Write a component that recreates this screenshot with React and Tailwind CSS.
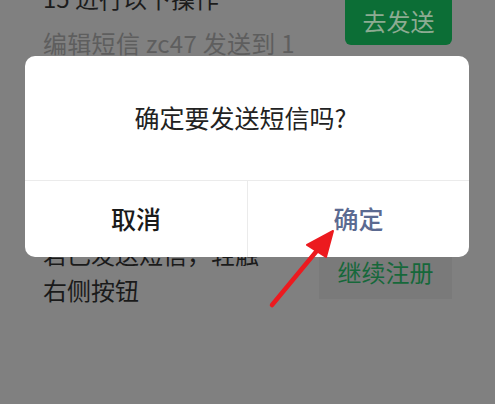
import React from 'react';

const font = { fontFamily: '"Noto Sans CJK SC", "Noto Sans", sans-serif' };

const App = () => {
    return (
        <div className="relative w-[495px] h-[404px] overflow-hidden bg-[#808080]" style={font}>
            {/* dimmed page behind the dialog */}
            <div className="flex flex-col px-[43px] -mt-[20px]">
                <div className="flex justify-between items-start">
                    <div className="flex flex-col">
                        <div className="h-[36px] leading-[36px] text-[24px] text-[#1c1c1c] whitespace-nowrap">15 进行以下操作</div>
                        <div className="mt-[11px] h-[32px] leading-[32px] text-[24px] tracking-[0.3px] text-[#5e5e5e] whitespace-nowrap">编辑短信 zc47 发送到 1</div>
                    </div>
                    <button
                        type="button"
                        className="w-[107px] h-[65px] rounded-[6px] bg-[#0c6e36] flex items-end justify-center pb-[12px] text-[24px] leading-[24px] text-[#8dab92]"
                    >
                        去发送
                    </button>
                </div>
                <div className="mt-[177px] flex justify-between items-center">
                    <div className="flex flex-col text-[24px] leading-[36px] text-[#1a1a1a]">
                        <div className="whitespace-nowrap">若已发送短信，轻触</div>
                        <div className="whitespace-nowrap">右侧按钮</div>
                    </div>
                    <button
                        type="button"
                        className="w-[133px] h-[54px] bg-[#7a7a7a] flex items-center justify-center text-[24px] text-[#16683a]"
                    >
                        继续注册
                    </button>
                </div>
            </div>

            {/* confirm dialog */}
            <div className="absolute left-[25px] top-[56px] w-[444px] h-[201px] bg-white rounded-[10px] flex flex-col overflow-hidden">
                <div className="h-[124px] flex items-center justify-center pr-[13px] text-[25px] text-[#222222]">
                    确定要发送短信吗?
                </div>
                <div className="flex-1 grid grid-cols-2 border-t border-[#ebebeb]">
                    <button type="button" className="flex items-center justify-center text-[25px] font-medium text-[#1a1a1a]">
                        取消
                    </button>
                    <button type="button" className="flex items-center justify-center text-[25px] font-medium text-[#5b6a91] border-l border-[#ebebeb]">
                        确定
                    </button>
                </div>
            </div>

            {/* red annotation arrow */}
            <svg className="absolute inset-0 pointer-events-none" width="495" height="404" viewBox="0 0 495 404">
                <line x1="272" y1="305" x2="320" y2="247" stroke="#ec1a1f" strokeWidth="4.5" strokeLinecap="round" />
                <polygon points="333,231 307,245 326,257" fill="#ec1a1f" stroke="#ec1a1f" strokeWidth="2" strokeLinejoin="round" />
            </svg>
        </div>
    );
};

export default App;
